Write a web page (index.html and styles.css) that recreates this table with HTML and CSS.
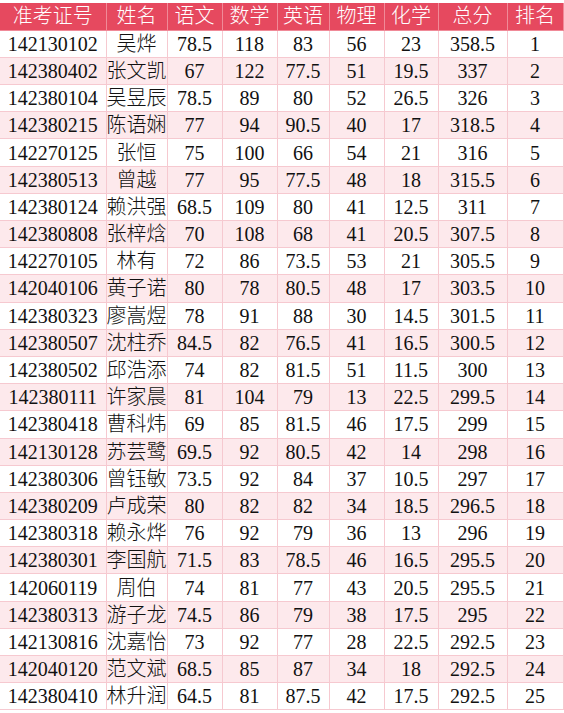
FILE: index.html
```html
<!DOCTYPE html>
<html lang="zh">
<head>
<meta charset="utf-8">
<link rel="stylesheet" href="styles.css">
</head>
<body>
<table class="score">
<colgroup>
<col class="c-id"><col class="c-name"><col class="c-s1"><col class="c-s2"><col class="c-s3"><col class="c-s4"><col class="c-s5"><col class="c-total"><col class="c-rank">
</colgroup>
<thead>
<tr><th>准考证号</th><th>姓名</th><th>语文</th><th>数学</th><th>英语</th><th>物理</th><th>化学</th><th>总分</th><th>排名</th></tr>
</thead>
<tbody>
<tr><td>142130102</td><td>吴烨</td><td>78.5</td><td>118</td><td>83</td><td>56</td><td>23</td><td>358.5</td><td>1</td></tr>
<tr><td>142380402</td><td>张文凯</td><td>67</td><td>122</td><td>77.5</td><td>51</td><td>19.5</td><td>337</td><td>2</td></tr>
<tr><td>142380104</td><td>吴昱辰</td><td>78.5</td><td>89</td><td>80</td><td>52</td><td>26.5</td><td>326</td><td>3</td></tr>
<tr><td>142380215</td><td>陈语娴</td><td>77</td><td>94</td><td>90.5</td><td>40</td><td>17</td><td>318.5</td><td>4</td></tr>
<tr><td>142270125</td><td>张恒</td><td>75</td><td>100</td><td>66</td><td>54</td><td>21</td><td>316</td><td>5</td></tr>
<tr><td>142380513</td><td>曾越</td><td>77</td><td>95</td><td>77.5</td><td>48</td><td>18</td><td>315.5</td><td>6</td></tr>
<tr><td>142380124</td><td>赖洪强</td><td>68.5</td><td>109</td><td>80</td><td>41</td><td>12.5</td><td>311</td><td>7</td></tr>
<tr><td>142380808</td><td>张梓焓</td><td>70</td><td>108</td><td>68</td><td>41</td><td>20.5</td><td>307.5</td><td>8</td></tr>
<tr><td>142270105</td><td>林有</td><td>72</td><td>86</td><td>73.5</td><td>53</td><td>21</td><td>305.5</td><td>9</td></tr>
<tr><td>142040106</td><td>黄子诺</td><td>80</td><td>78</td><td>80.5</td><td>48</td><td>17</td><td>303.5</td><td>10</td></tr>
<tr><td>142380323</td><td>廖嵩煜</td><td>78</td><td>91</td><td>88</td><td>30</td><td>14.5</td><td>301.5</td><td>11</td></tr>
<tr><td>142380507</td><td>沈柱乔</td><td>84.5</td><td>82</td><td>76.5</td><td>41</td><td>16.5</td><td>300.5</td><td>12</td></tr>
<tr><td>142380502</td><td>邱浩添</td><td>74</td><td>82</td><td>81.5</td><td>51</td><td>11.5</td><td>300</td><td>13</td></tr>
<tr><td>142380111</td><td>许家晨</td><td>81</td><td>104</td><td>79</td><td>13</td><td>22.5</td><td>299.5</td><td>14</td></tr>
<tr><td>142380418</td><td>曹科炜</td><td>69</td><td>85</td><td>81.5</td><td>46</td><td>17.5</td><td>299</td><td>15</td></tr>
<tr><td>142130128</td><td>苏芸鹭</td><td>69.5</td><td>92</td><td>80.5</td><td>42</td><td>14</td><td>298</td><td>16</td></tr>
<tr><td>142380306</td><td>曾钰敏</td><td>73.5</td><td>92</td><td>84</td><td>37</td><td>10.5</td><td>297</td><td>17</td></tr>
<tr><td>142380209</td><td>卢成荣</td><td>80</td><td>82</td><td>82</td><td>34</td><td>18.5</td><td>296.5</td><td>18</td></tr>
<tr><td>142380318</td><td>赖永烨</td><td>76</td><td>92</td><td>79</td><td>36</td><td>13</td><td>296</td><td>19</td></tr>
<tr><td>142380301</td><td>李国航</td><td>71.5</td><td>83</td><td>78.5</td><td>46</td><td>16.5</td><td>295.5</td><td>20</td></tr>
<tr><td>142060119</td><td>周伯</td><td>74</td><td>81</td><td>77</td><td>43</td><td>20.5</td><td>295.5</td><td>21</td></tr>
<tr><td>142380313</td><td>游子龙</td><td>74.5</td><td>86</td><td>79</td><td>38</td><td>17.5</td><td>295</td><td>22</td></tr>
<tr><td>142130816</td><td>沈嘉怡</td><td>73</td><td>92</td><td>77</td><td>28</td><td>22.5</td><td>292.5</td><td>23</td></tr>
<tr><td>142040120</td><td>范文斌</td><td>68.5</td><td>85</td><td>87</td><td>34</td><td>18</td><td>292.5</td><td>24</td></tr>
<tr><td>142380410</td><td>林升润</td><td>64.5</td><td>81</td><td>87.5</td><td>42</td><td>17.5</td><td>292.5</td><td>25</td></tr>
</tbody>
</table>
</body>
</html>
```
FILE: styles.css
```css
html, body {
  margin: 0;
  padding: 0;
  background: #ffffff;
}
body {
  padding-top: 3px;
  font-family: "Liberation Serif", "Noto Sans CJK SC", serif;
  font-size: 20px;
  font-weight: 300;
  color: #111111;
  overflow: hidden;
}
.score {
  border-collapse: collapse;
  table-layout: fixed;
  width: 563px;
}
.c-id { width: 106px; }
.c-name { width: 61px; }
.c-s1 { width: 55px; }
.c-s2 { width: 55px; }
.c-s3 { width: 52px; }
.c-s4 { width: 55px; }
.c-s5 { width: 54px; }
.c-total { width: 69px; }
.c-rank { width: 56px; }
.score th,
.score td {
  height: 27.2px;
  padding: 0;
  text-align: center;
  vertical-align: middle;
  white-space: nowrap;
  overflow: hidden;
  line-height: 26px;
  box-sizing: border-box;
}
.score th {
  background: #e6495f;
  color: #ffffff;
  font-weight: 300;
  border: 1px solid #f08a98;
  border-top: none;
}
.score td {
  border: 1px solid #f6c9d0;
}
.score tbody tr:nth-child(even) td {
  background: #fde9ec;
}
.score tr > :first-child {
  border-left: none;
}
```
